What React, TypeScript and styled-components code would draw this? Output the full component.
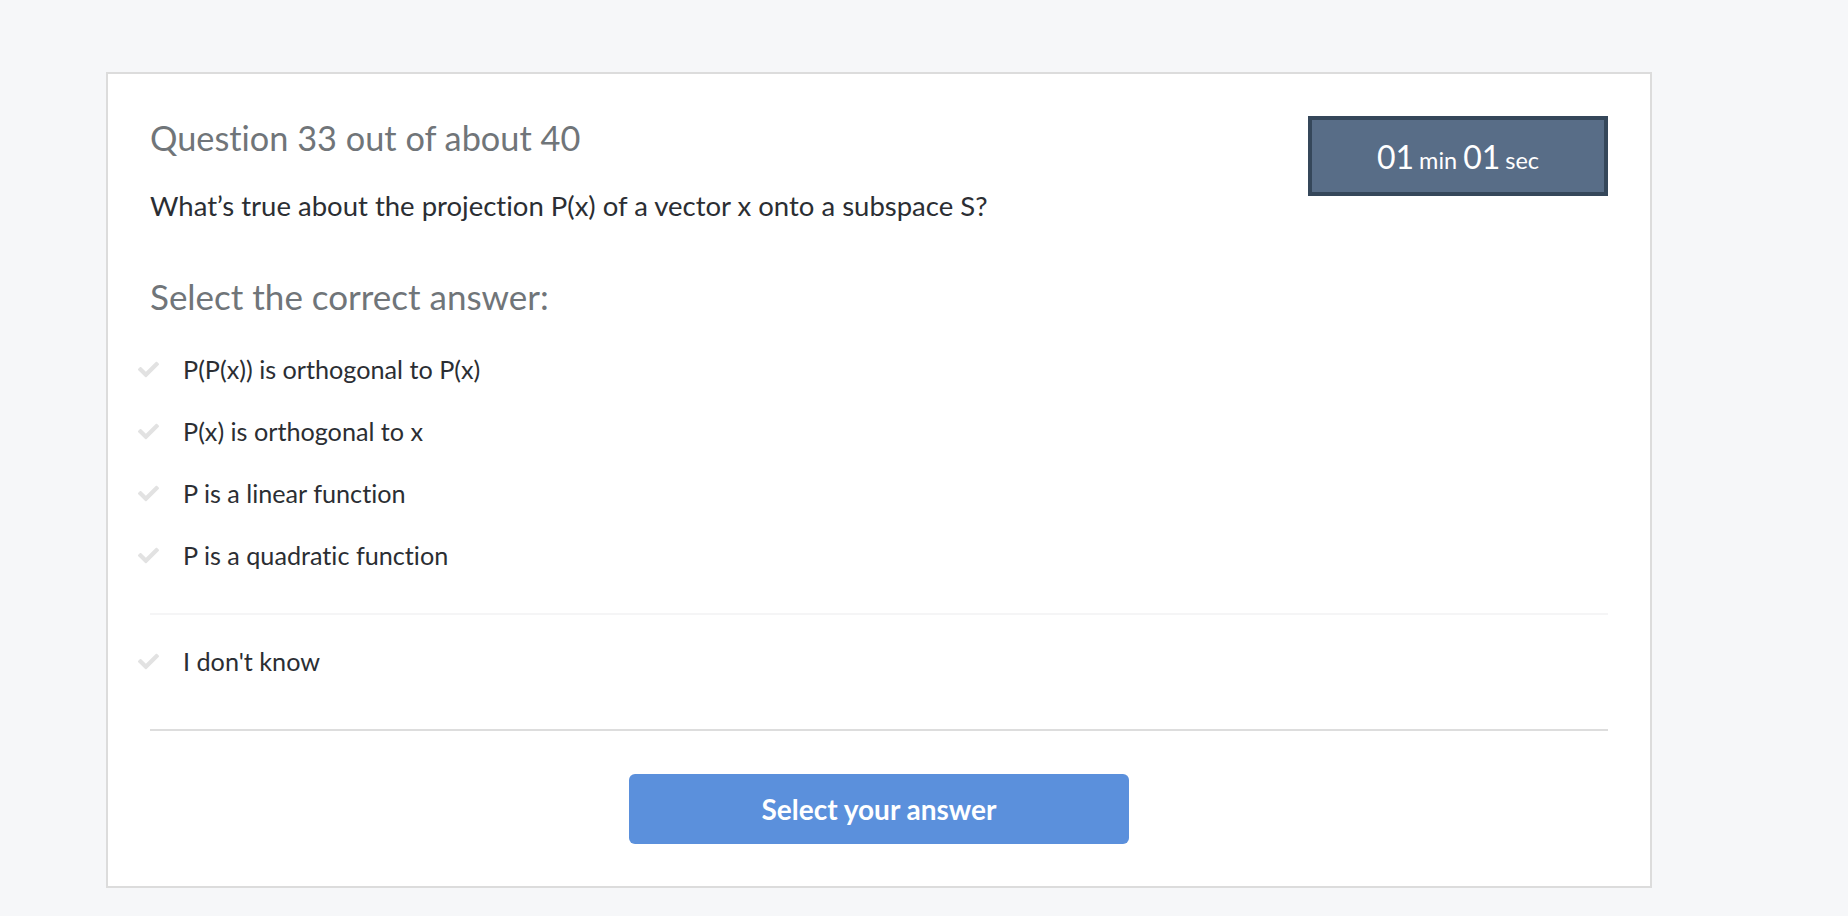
import React from "react";
import styled, { createGlobalStyle } from "styled-components";
import { FaCheck } from "react-icons/fa";

const Global = createGlobalStyle`
  html, body { margin: 0; padding: 0; background: #f6f7f9; }
  body {
    font-family: Lato, "Open Sans", sans-serif;
    font-variant-ligatures: no-common-ligatures;
  }
  * { box-sizing: border-box; }
`;

const Page = styled.div`
  padding: 72px 0 0 106px;
  min-height: 916px;
`;

const Card = styled.section`
  width: 1546px;
  background: #ffffff;
  border: 2px solid #dcdcdc;
  padding: 42px;
`;

const Header = styled.div`
  display: flex;
  justify-content: space-between;
  align-items: flex-start;
`;

const HeaderText = styled.div`
  display: flex;
  flex-direction: column;
`;

const Title = styled.h1`
  margin: 2px 0 0 0;
  font-weight: 400;
  font-size: 34.3px;
  line-height: 40px;
  color: #707579;
`;

const Prompt = styled.p`
  margin: 32px 0 0 0;
  font-size: 27.5px;
  line-height: 32px;
  color: #2b2e33;
`;

const Timer = styled.div`
  width: 300px;
  height: 80px;
  background: #586d87;
  border: 4px solid #35475a;
  color: #ffffff;
  display: flex;
  align-items: center;
  justify-content: center;
  padding-top: 1px;
`;

const TimerText = styled.div`
  line-height: 1;
  white-space: nowrap;
`;

const TimerNum = styled.span`
  font-size: 32px;
`;

const TimerUnit = styled.span`
  font-size: 23.5px;
  margin: 0 6px 0 5px;
  &:last-child { margin-right: 0; }
`;

const Subhead = styled.h2`
  margin: 54px 0 0 0;
  font-weight: 400;
  font-size: 35px;
  line-height: 40px;
  color: #707579;
`;

const Options = styled.div`
  margin-top: 22px;
  display: flex;
  flex-direction: column;
`;

const Option = styled.div`
  height: 62px;
  margin-left: -12px;
  display: flex;
  align-items: center;
  gap: 24px;
  font-size: 25.2px;
  color: #2b2e33;
  cursor: pointer;
`;

const Check = styled(FaCheck)`
  width: 21px;
  height: 21px;
  color: #e2e2e2;
  flex: none;
`;

const LightRule = styled.hr`
  margin: 27px 0 15px 0;
  border: none;
  height: 2px;
  background: #f5f5f6;
`;

const DarkRule = styled.hr`
  margin: 37px 0 0 0;
  border: none;
  height: 2px;
  background: #dddddd;
`;

const Footer = styled.div`
  display: flex;
  justify-content: center;
  margin-top: 43px;
`;

const Button = styled.button`
  width: 500px;
  height: 70px;
  border: none;
  border-radius: 6px;
  background: #5b90dc;
  color: #ffffff;
  font-family: Lato, "Open Sans", sans-serif;
  font-variant-ligatures: no-common-ligatures;
  font-weight: 700;
  font-size: 28px;
  cursor: pointer;
`;

const answers = [
  "P(P(x)) is orthogonal to P(x)",
  "P(x) is orthogonal to x",
  "P is a linear function",
  "P is a quadratic function",
];

export default function App() {
  return (
    <>
      <Global />
      <Page>
        <Card>
          <Header>
            <HeaderText>
              <Title>Question 33 out of about 40</Title>
              <Prompt>What’s true about the projection P(x) of a vector x onto a subspace S?</Prompt>
            </HeaderText>
            <Timer>
              <TimerText>
                <TimerNum>01</TimerNum>
                <TimerUnit>min</TimerUnit>
                <TimerNum>01</TimerNum>
                <TimerUnit>sec</TimerUnit>
              </TimerText>
            </Timer>
          </Header>
          <Subhead>Select the correct answer:</Subhead>
          <Options>
            {answers.map((a) => (
              <Option key={a}>
                <Check />
                <span>{a}</span>
              </Option>
            ))}
          </Options>
          <LightRule />
          <Option>
            <Check />
            <span>I don't know</span>
          </Option>
          <DarkRule />
          <Footer>
            <Button>Select your answer</Button>
          </Footer>
        </Card>
      </Page>
    </>
  );
}
